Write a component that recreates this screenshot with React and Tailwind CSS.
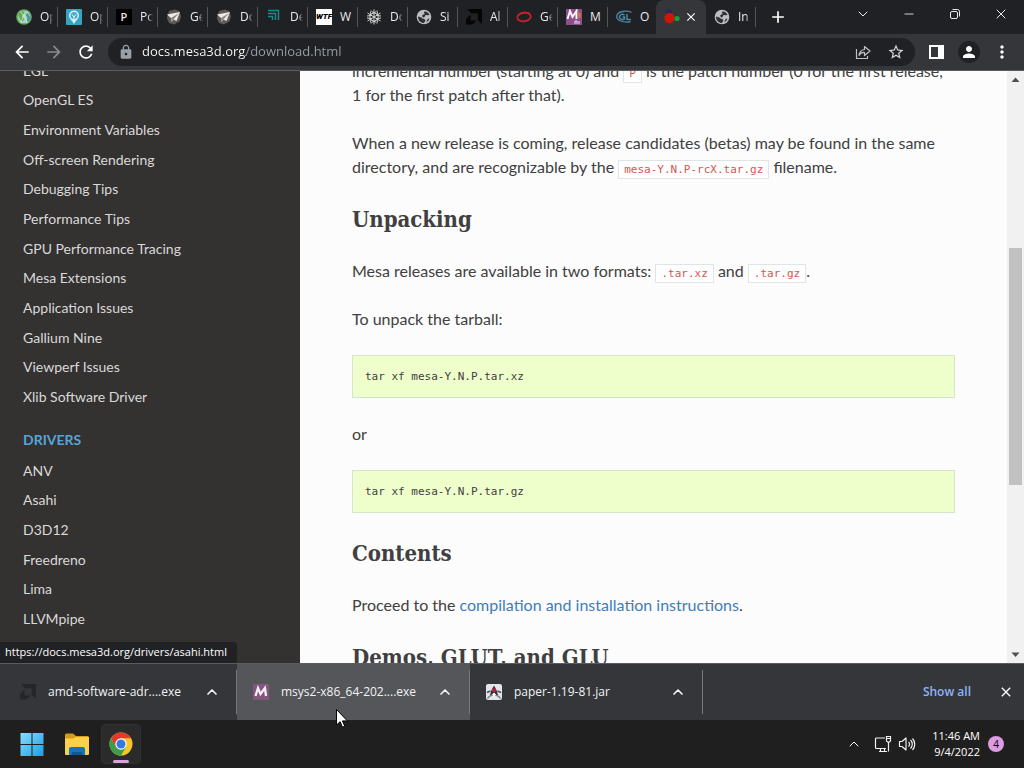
import { MdArrowBack, MdArrowForward, MdRefresh, MdLock, MdStarBorder, MdPerson, MdMoreVert, MdAdd, MdClose } from 'react-icons/md';
import { ChevronDown, ChevronUp, Minus, X } from 'lucide-react';

const mesaLinks = [
  'EGL',
  'OpenGL ES',
  'Environment Variables',
  'Off-screen Rendering',
  'Debugging Tips',
  'Performance Tips',
  'GPU Performance Tracing',
  'Mesa Extensions',
  'Application Issues',
  'Gallium Nine',
  'Viewperf Issues',
  'Xlib Software Driver',
];

const driverLinks = ['ANV', 'Asahi', 'D3D12', 'Freedreno', 'Lima', 'LLVMpipe'];

function EarthIcon() {
  return (
    <svg viewBox="0 0 16 16" className="size-4">
      <circle cx="8" cy="8" r="7.8" fill="#69a85f" />
      <circle cx="8" cy="8" r="6.2" fill="#9fd3c4" />
      <path d="M3 4c2-2 4-2 5-1s-1 3-2 4 2 1 2 3-2 3-3 2-1-3-2-4-1-3 0-4z" fill="#62ad50" />
      <path d="M10 4c2 0 3 2 4 4s-1 4-3 5c-1-2 1-3 0-5s-2-2-1-4z" fill="#4b92a8" />
      <path d="M4 2.500C7 5 10 9 11 14M12 2.500C9 5 6 9 5 14" stroke="#e0f0cd" strokeWidth=".8" fill="none" />
    </svg>
  );
}

function MapPinIcon() {
  return (
    <svg viewBox="0 0 16 16" className="size-4">
      <rect width="16" height="16" rx="1" fill="#35a5c4" />
      <path d="M8 1.500a5 5 0 0 1 5 5c0 3-3 5-5 8.500-2-3.500-5-5.500-5-8.500a5 5 0 0 1 5-5z" fill="#d9eef5" />
      <circle cx="8" cy="6.500" r="3.500" fill="#4aa9cf" />
      <path d="M6 5.500l2 2.500 2-2.500M8 8v2" stroke="#e9f6fa" fill="none" />
    </svg>
  );
}

function PlaneIcon() {
  return (
    <svg viewBox="0 0 16 16" className="size-4">
      <path d="M3 2l6-1.500 4 1.500 2 5-1.500 5.500L8 15.500l-5-1.500L.800 9z" fill="#5d5a58" />
      <path d="M1 5.500L14 3 10.500 12 7.500 10.500l-2 2.500-.500-4z" fill="#eceae8" />
      <path d="M5 9L13 4 7.500 10.500 5.500 13z" fill="#8b8987" />
    </svg>
  );
}

function CornersIcon() {
  return (
    <svg viewBox="0 0 16 16" className="size-4" fill="none" stroke="#138d88" strokeWidth="1.5">
      <path d="M2 1.500h10.500V11M2 4.500h7.500V11M2 7.500h4.500V11" />
    </svg>
  );
}

function SnowIcon() {
  return (
    <svg viewBox="0 0 16 16" className="size-4" fill="none" stroke="#d5d5d5">
      <path d="M8 .500v15M1.500 4l13 8M14.500 4l-13 8M5 1.500l3 3 3-3M5 14.500l3-3 3 3M1 7l4-.500L4.500 2.500M15 7l-4-.500.500-4M1 9l4 .500-.500 4M15 9l-4 .500.500 4" />
      <path d="M8 3.500l4 2.300v4.400l-4 2.300-4-2.300V5.800z" />
    </svg>
  );
}

function GlobeIcon() {
  return (
    <svg viewBox="0 0 16 16" className="size-4">
      <circle cx="8" cy="8" r="7.300" fill="#bcbec2" />
      <path d="M8.500 2.500c2-.500 4 1 5 3-1 1.500-2 0-3.500.500S9 8 8 8.500 5.500 7 6.500 6 9 5.500 8.500 4.500 7.500 3 8.500 2.500zM2 7.500l3.500 1C6 10 8 9.500 9 10.500s-.500 2.500-1 3.500C4.500 14 2 11.500 2 7.500zM11 11c1-1.500 2-1.500 2.500-1.500C13 11 12 12.500 10.500 13.200z" fill="#303134" />
    </svg>
  );
}

function AmdIcon({ fill = '#050505' }) {
  return (
    <svg viewBox="0 0 16 16" className="size-4" fill={fill}>
      <path d="M1 0h15v15l-4.300-4.300V4.300H5.300zM4.500 5.500v6h6L6.500 15.500H0V10z" />
    </svg>
  );
}

function RingIcon() {
  return (
    <svg viewBox="0 0 16 16" className="size-4" fill="none" stroke="#c9202f">
      <ellipse cx="8" cy="8" rx="6.800" ry="4.300" strokeWidth="1.800" transform="rotate(-8 8 8)" />
      <path d="M1.500 7c3-3.500 8-4.500 12-2.500" strokeWidth="1.500" />
    </svg>
  );
}

function MsysIcon() {
  return (
    <svg viewBox="0 0 16 16" className="size-4">
      <rect width="16" height="16" fill="#84557f" />
      <path d="M2.500 12L5 4l2.500 6L12 4l1 8" fill="none" stroke="#f5eef4" strokeWidth="2.300" />
    </svg>
  );
}

function MsysTabIcon() {
  return (
    <svg viewBox="0 0 16 16" className="size-4">
      <rect width="16" height="16" fill="#8d4f88" />
      <path d="M1.500 10L4 2l2.500 6L10.500 2v8" fill="none" stroke="#fbf5fa" strokeWidth="2" />
      <path d="M12 2v7M14 4v5" stroke="#d9804d" strokeWidth="1.300" />
      <path d="M9 15v-3h2v3M13 12v3" fill="none" stroke="#f0dfee" />
    </svg>
  );
}

function OpenGLIcon() {
  return (
    <svg viewBox="0 0 16 16" className="size-4" fill="none" stroke="#4a87a6">
      <path d="M15.500 3.500C11 1 1 2 .800 7.500.600 12 9 14 14.500 12.500" strokeWidth="1.300" />
      <path d="M8.500 6C6 4.500 3.500 6 3.500 8s2.500 3.200 5 2V8H6.500M11 5v5.500h4" strokeWidth="1.500" />
    </svg>
  );
}

function MesaIcon() {
  return (
    <svg viewBox="0 0 16 16" className="size-4">
      <circle cx="5" cy="3.500" r="3" fill="#26266d" />
      <circle cx="5.500" cy="9" r="5.200" fill="#cf1408" />
      <circle cx="13" cy="9.500" r="2.600" fill="#17a034" />
    </svg>
  );
}

function JavaIcon() {
  return (
    <svg viewBox="0 0 16 16" className="size-4">
      <rect width="16" height="16" rx="2" fill="#e4e5ea" />
      <path d="M8 1.500L5.500 6 4 11h8l-1.500-5z" fill="#2c2f38" />
      <path d="M1 8.500l3.500-1.500M15 8.500L11.500 7" stroke="#4c5059" strokeWidth="1.800" />
      <path d="M1.500 14.500c2-3 4-3.500 6.500-3.500s4.500.500 6.500 3.500" stroke="#7b7f88" strokeWidth="1.500" fill="none" />
      <path d="M6 10.500l2-2 2 2-2 2.500z" fill="#fff" />
      <circle cx="8" cy="6.300" r="2" fill="#c21f43" />
    </svg>
  );
}

function ShareIcon() {
  return (
    <svg viewBox="0 0 16 16" className="size-4" fill="none" stroke="#bdc1c6" strokeWidth="1.200" strokeLinejoin="round">
      <path d="M1.500 5v9.500h11V12M9.500 5.500V2.500L15 7l-5.500 4.500v-3C7 8.300 5 9.500 4 11.500 4.300 8.500 6 6 9.500 5.500z" />
    </svg>
  );
}

function ChromeIcon() {
  return (
    <svg viewBox="0 0 24 24" className="size-6">
      <circle cx="12" cy="12" r="11.500" fill="#f9c629" />
      <path d="M2.040 6.250A11.500 11.500 0 0 1 21.960 6.250H12L7 14.900z" fill="#dd3b2c" />
      <path d="M2.040 6.250A11.500 11.500 0 0 0 12 23.500l5-8.600H7z" fill="#3a9c4c" />
      <circle cx="12" cy="12" r="5.700" fill="#fff" />
      <circle cx="12" cy="12" r="4.500" fill="#3279e2" />
    </svg>
  );
}

function FolderIcon() {
  return (
    <svg viewBox="0 0 26 24" className="h-6 w-[26px]">
      <path d="M1 3a1.500 1.500 0 0 1 1.500-1.500H9L12 4h11.500A1.500 1.500 0 0 1 25 5.500V9H1z" fill="#d99a16" />
      <path d="M1 6.500h8l2.500-1.500H25v17a1 1 0 0 1-1 1H2a1 1 0 0 1-1-1z" fill="#fbd04b" />
      <path d="M5 23v-6a2 2 0 0 1 2-2h12a2 2 0 0 1 2 2v6z" fill="#1673bd" />
      <path d="M8 23v-3h10v3z" fill="#0e579b" />
    </svg>
  );
}

function WindowsIcon() {
  return (
    <svg viewBox="0 0 24 24" className="size-6">
      <defs>
        <linearGradient id="win" x1="0" y1="0" x2="1" y2="1">
          <stop offset="0" stopColor="#8bdcfd" />
          <stop offset="1" stopColor="#159fe8" />
        </linearGradient>
      </defs>
      <path d="M.500 1h11v11H.500zM12.500 1h11v11h-11zM.500 13h11v11H.500zM12.500 13h11v11h-11z" fill="url(#win)" />
    </svg>
  );
}

function RestoreIcon() {
  return (
    <svg viewBox="0 0 12 12" className="size-3" fill="none" stroke="#e8eaed">
      <rect x="1.500" y="3.500" width="7" height="7" rx="1.500" />
      <path d="M3.500 1.500h5a2 2 0 0 1 2 2v5" />
    </svg>
  );
}

function NetworkIcon() {
  return (
    <svg viewBox="0 0 18 18" className="size-[18px]" fill="none" stroke="#f1f1f1" strokeWidth="1.200">
      <path d="M11 3H2.500A1 1 0 0 0 1.500 4v8.500a1 1 0 0 0 1 1H12M5 16.500h8M6.500 13.500v3M10.500 13.500v3M14.500 7v9.500" />
      <path d="M12.500 1.500h4V6l-1 1h-2l-1-1zM12.500 3.500h4" />
    </svg>
  );
}

function SpeakerIcon() {
  return (
    <svg viewBox="0 0 18 18" className="size-[18px]" fill="none" stroke="#f1f1f1" strokeWidth="1.200" strokeLinejoin="round">
      <path d="M1.500 6.500h2.500L8 3v12l-4-3.500H1.500zM10.500 7a3 3 0 0 1 0 4.500M12.500 5a6 6 0 0 1 0 8.500M14.500 3.500a8.500 8.500 0 0 1 0 11.500" />
    </svg>
  );
}

const tabs = [
  { title: 'Op', icon: <EarthIcon /> },
  { title: 'Op', icon: <MapPinIcon /> },
  { title: 'Po', icon: <span className="flex size-4 items-center justify-center bg-black text-[11px] font-semibold">P</span> },
  { title: 'Ge', icon: <PlaneIcon /> },
  { title: 'Do', icon: <PlaneIcon /> },
  { title: 'De', icon: <CornersIcon /> },
  { title: 'W', icon: <span className="flex size-4 items-center justify-center bg-white font-[Roboto] text-[8px] font-black italic text-black">WTF</span> },
  { title: 'Do', icon: <SnowIcon /> },
  { title: 'Si', icon: <GlobeIcon /> },
  { title: 'Al', icon: <AmdIcon /> },
  { title: 'Ge', icon: <RingIcon /> },
  { title: 'M', icon: <MsysTabIcon /> },
  { title: 'O', icon: <OpenGLIcon /> },
];

const downloads = [
  { name: 'amd-software-adr....exe', icon: <AmdIcon fill="#242527" /> },
  { name: 'msys2-x86_64-202....exe', icon: <MsysIcon />, hover: true },
  { name: 'paper-1.19-81.jar', icon: <JavaIcon /> },
];

function Tab({ title, icon, last }) {
  return (
    <button role="tab" className="flex h-full w-[50px] shrink-0 items-center pl-2">
      <span className="size-4 shrink-0">{icon}</span>
      <span className={`ml-2 w-[13px] overflow-hidden text-left whitespace-nowrap ${title.length > 1 ? 'mask-r-from-60%' : ''}`}>{title}</span>
      <span className={`ml-auto h-5 w-px shrink-0 ${last ? 'bg-transparent' : 'bg-[#55565a]'}`} />
    </button>
  );
}

function TabStrip() {
  return (
    <header className="flex h-[34px] shrink-0 bg-[#202124] pl-2 text-xs text-[#e8eaed]">
      <div role="tablist" className="flex">
        {tabs.map((tab, i) => (
          <Tab key={i} title={tab.title} icon={tab.icon} last={i === tabs.length - 1} />
        ))}
        <div role="tab" aria-selected="true" className="-ml-0.5 flex w-[50px] items-center justify-between rounded-t-lg bg-[#35363a] pr-2 pl-2">
          <MesaIcon />
          <button aria-label="Close tab"><MdClose className="size-3.5 text-white" /></button>
        </div>
        <Tab title="In" icon={<GlobeIcon />} />
      </div>
      <button aria-label="New tab" className="ml-3"><MdAdd className="size-5 text-white" /></button>
      <div className="ml-auto flex h-7 items-center">
        <button aria-label="Search tabs" className="flex w-[46px] justify-center"><ChevronDown size={16} strokeWidth={1.5} /></button>
        <button aria-label="Minimize" className="flex w-[46px] justify-center"><Minus size={14} strokeWidth={1.5} /></button>
        <button aria-label="Restore" className="flex w-[46px] justify-center"><RestoreIcon /></button>
        <button aria-label="Close" className="flex w-[46px] justify-center"><X size={16} strokeWidth={1.5} /></button>
      </div>
    </header>
  );
}

function Toolbar() {
  return (
    <div className="flex h-[37px] shrink-0 items-center border-b border-[#5b5c60] bg-[#35363a] px-3 text-[#e8eaed]">
      <button aria-label="Back" className="mr-3"><MdArrowBack className="size-5 text-white" /></button>
      <button aria-label="Forward" className="mr-3"><MdArrowForward className="size-5 text-[#8a8b8e]" /></button>
      <button aria-label="Reload" className="mr-3"><MdRefresh className="size-5 text-white" /></button>
      <div className="flex h-7 flex-1 items-center rounded-full bg-[#202124] px-2.5">
        <MdLock className="mr-2 size-4 text-[#9aa0a6]" />
        <input
          aria-label="Address"
          readOnly
          value="docs.mesa3d.org/download.html"
          className="min-w-0 flex-1 bg-[linear-gradient(to_right,#ffffff_104px,#9aa0a6_104px)] bg-clip-text text-[13px] text-transparent outline-none"
        />
        <button aria-label="Share" className="mr-4"><ShareIcon /></button>
        <button aria-label="Bookmark"><MdStarBorder className="size-[18px] text-[#d5d7da]" /></button>
      </div>
      <button aria-label="Side panel" className="ml-3.5 flex h-3.5 w-[15px] justify-end border-2 border-white"><span className="h-full w-1 bg-white" /></button>
      <button aria-label="Profile" className="ml-3.5 flex size-[22px] items-center justify-center rounded-full bg-[#202124]"><MdPerson className="size-[18px] text-white" /></button>
      <button aria-label="Menu" className="ml-3"><MdMoreVert className="size-5 text-white" /></button>
    </div>
  );
}

function Sidebar() {
  return (
    <nav className="w-[300px] shrink-0 bg-[#343131] pl-[23px] font-[Lato,sans-serif] text-sm text-[#d9d9d9]">
      <ul className="-mt-[15px] grid h-[356px] auto-rows-fr">
        {mesaLinks.map(link => (
          <li key={link} className="flex items-center"><a href="#">{link}</a></li>
        ))}
      </ul>
      <p className="mt-3 flex h-8 items-center font-bold text-[#55a5d9]">DRIVERS</p>
      <ul className="grid h-[178px] auto-rows-fr">
        {driverLinks.map(link => (
          <li key={link} className="flex items-center"><a href="#">{link}</a></li>
        ))}
      </ul>
    </nav>
  );
}

function Code({ children }) {
  return (
    <code className="border border-[#e1e4e5] bg-white px-[5px] py-0.5 font-['DejaVu_Sans_Mono',monospace] text-[11px] leading-none text-[#d9534f]">{children}</code>
  );
}

function Heading({ children }) {
  return (
    <h2 className="mb-6 font-['DejaVu_Serif_Condensed','DejaVu_Serif',serif] text-[22px] leading-8 font-bold whitespace-nowrap">{children}</h2>
  );
}

function CodeBlock({ children }) {
  return (
    <pre className="mb-6 border border-[#d5e5cc] bg-[#eeffcc] p-3 font-['DejaVu_Sans_Mono',monospace] text-[11px] leading-[17px] text-[#404040]">{children}</pre>
  );
}

function Article() {
  return (
    <main className="min-w-0 flex-1 bg-[#fcfcfc] px-[52px] font-[Lato,sans-serif] text-base leading-6 text-[#404040]">
      <p className="-mt-3 mb-6">
        incremental number (starting at 0) and <Code>P</Code> is the patch number (0 for the first release, 1 for the first patch after that).
      </p>
      <p className="mb-6">
        When a new release is coming, release candidates (betas) may be found in the same directory, and are recognizable by the <Code>mesa-Y.N.P-rcX.tar.gz</Code> filename.
      </p>
      <Heading>Unpacking</Heading>
      <p className="mb-6">
        Mesa releases are available in two formats: <Code>.tar.xz</Code> and <Code>.tar.gz</Code>.
      </p>
      <p className="mb-6">To unpack the tarball:</p>
      <CodeBlock>tar xf mesa-Y.N.P.tar.xz</CodeBlock>
      <p className="mb-6">or</p>
      <CodeBlock>tar xf mesa-Y.N.P.tar.gz</CodeBlock>
      <Heading>Contents</Heading>
      <p className="mb-6">
        Proceed to the <a href="#" className="text-[#3f7cb8]">compilation and installation instructions</a>.
      </p>
      <Heading>Demos, GLUT, and GLU</Heading>
    </main>
  );
}

function Scrollbar() {
  return (
    <div className="flex w-[17px] shrink-0 flex-col items-center bg-[#f1f1f1]">
      <svg viewBox="0 0 17 17" className="size-[17px]" fill="#505050"><path d="M4.500 11h8l-4-4.500z" /></svg>
      <div className="grow-[160]" />
      <div className="w-[13px] grow-[236] bg-[#c1c1c1]" />
      <div className="grow-[161]" />
      <svg viewBox="0 0 17 17" className="size-[17px]" fill="#505050"><path d="M4.500 6.500h8l-4 4.500z" /></svg>
    </div>
  );
}

function DownloadShelf() {
  return (
    <section aria-label="Downloads" className="relative flex h-[57px] shrink-0 border-t border-[#5b5c60] bg-[#35363a] text-xs text-[#f1f3f4]">
      {downloads.map(d => (
        <div key={d.name} className={`flex w-[233px] items-center pl-4 first:w-[237px] first:pl-5 ${d.hover ? 'bg-[#55565a]' : ''}`}>
          <button className="flex items-center">
            {d.icon}
            <span className="ml-3 whitespace-nowrap">{d.name}</span>
          </button>
          <button aria-label="Download options" className="mr-4 ml-auto"><ChevronUp size={16} strokeWidth={2.5} /></button>
          <span className="h-11 w-px bg-[#77787b]" />
        </div>
      ))}
      <div className="ml-auto flex items-center">
        <button className="font-semibold text-[#8ab4f8]">Show all</button>
        <button aria-label="Close downloads" className="mr-2.5 ml-[27px]"><MdClose className="size-4 text-white" /></button>
      </div>
      <svg viewBox="0 0 12 19" className="absolute top-[45px] left-[336px] z-10 h-[19px] w-3">
        <path d="M.500.500v15.500l3.600-3.300 2.400 5.500 2.300-1-2.400-5.300h5z" fill="#fff" stroke="#000" />
      </svg>
    </section>
  );
}

function Taskbar() {
  return (
    <footer className="flex h-12 shrink-0 items-center bg-[#1f1f1f] px-5 text-white">
      <button aria-label="Start"><WindowsIcon /></button>
      <button aria-label="File Explorer" className="ml-5"><FolderIcon /></button>
      <button aria-label="Chrome" className="relative ml-[11px] flex size-10 items-center justify-center rounded-sm border border-[#303030] bg-[#2b2b2b]">
        <ChromeIcon />
        <span className="absolute bottom-0 h-[3px] w-4 rounded-full bg-[#d9a3dc]" />
      </button>
      <button aria-label="Hidden icons" className="ml-auto"><ChevronUp size={16} strokeWidth={1.5} /></button>
      <button aria-label="Network" className="ml-3"><NetworkIcon /></button>
      <button aria-label="Volume" className="ml-1.5"><SpeakerIcon /></button>
      <div className="ml-4 text-right text-[11px] leading-4">
        <p>11:46 AM</p>
        <p>9/4/2022</p>
      </div>
      <span className="ml-2 flex size-4 items-center justify-center rounded-full bg-[#dc9be2] text-[10px] text-black">4</span>
    </footer>
  );
}

export default function App() {
  return (
    <div className="flex h-screen flex-col overflow-hidden font-['Open_Sans','Noto_Sans',sans-serif]">
      <TabStrip />
      <Toolbar />
      <div className="relative flex min-h-0 flex-1 overflow-hidden">
        <Sidebar />
        <Article />
        <Scrollbar />
        <p className="absolute bottom-0 left-0 h-[21px] w-[237px] rounded-tr-sm bg-[#202124] px-[5px] text-[11px] leading-5 whitespace-nowrap text-white">https://docs.mesa3d.org/drivers/asahi.html</p>
      </div>
      <DownloadShelf />
      <Taskbar />
    </div>
  );
}
